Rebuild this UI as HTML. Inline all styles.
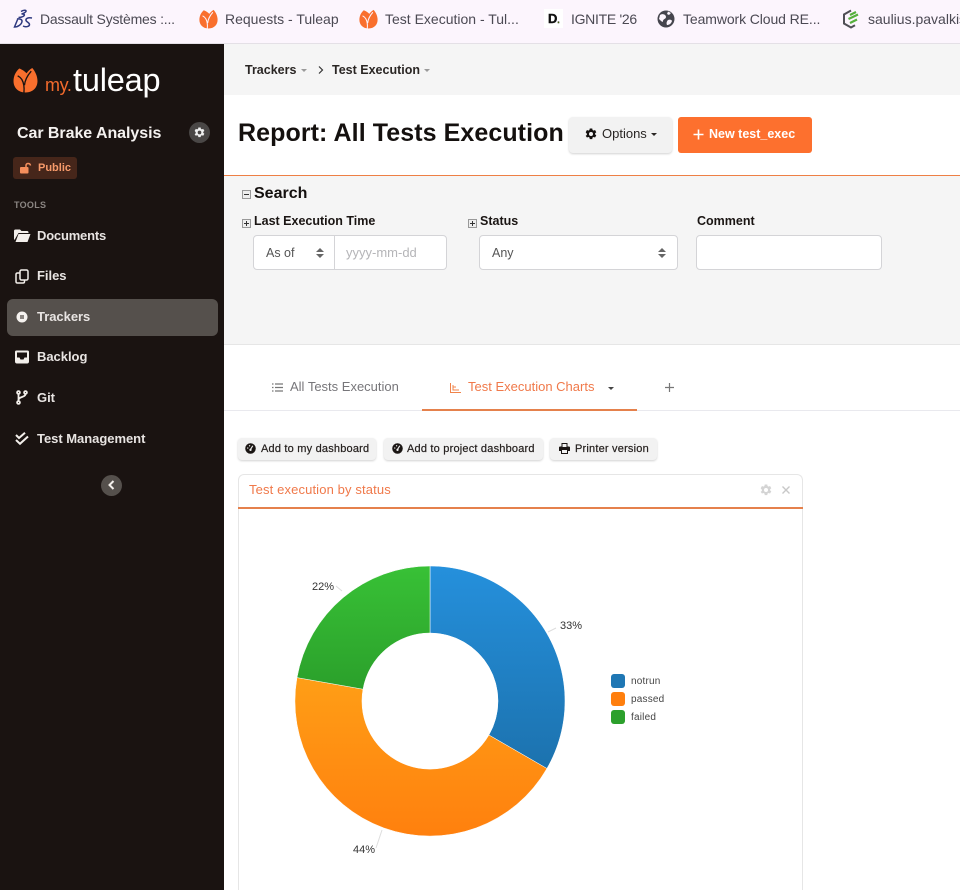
<!DOCTYPE html>
<html lang="en"><head><meta charset="utf-8"><title>Report: All Tests Execution</title>
<style>
html{margin:0;padding:0;background:#fff;width:960px;height:890px;overflow:hidden}
body{margin:0;padding:0;background:#fff;width:960px;height:890px;position:relative;overflow:hidden;font-family:"Liberation Sans",sans-serif;color:#1a1513}
.a,.t{position:absolute}
.t{white-space:nowrap;line-height:20px;height:20px}
.bm{font-size:14px;color:#4b4953;top:9px}
.nav{font-size:13px;font-weight:bold;color:#e8e4e2;left:37px;letter-spacing:-.03px}
.btn{position:absolute;background:#f2f2f2;border-radius:4px;box-shadow:0 1px 2px rgba(0,0,0,.18)}
.sm{font-size:11px;color:#26211f;letter-spacing:.2px;font-weight:normal;-webkit-text-stroke:.2px #26211f}
.lab{font-size:12.500px;font-weight:bold;color:#1a1513}
.inp{position:absolute;background:#fff;border:1px solid #d4d4d7;border-radius:4px;box-sizing:border-box}
.pm{position:absolute;width:7px;height:7px;border:1px solid #999;background:#eee;box-sizing:content-box}
.pm:before{content:"";position:absolute;left:1px;right:1px;top:3px;height:1px;background:#333}
.plus:after{content:"";position:absolute;top:1px;bottom:1px;left:3px;width:1px;background:#333}
svg{position:absolute;overflow:visible}
.pct{font-size:11px;color:#333}
.lg{font-size:10px;color:#444;letter-spacing:.2px}
.up{position:absolute;width:0;height:0;border-left:4px solid transparent;border-right:4px solid transparent;border-bottom:4px solid #666}
.dn{position:absolute;width:0;height:0;border-left:4px solid transparent;border-right:4px solid transparent;border-top:4px solid #666}
</style></head><body>
<svg width="0" height="0" style="position:absolute"><defs>
<symbol id="tulip" viewBox="0 0 24 24"><path fill="#f96f2d" d="M6 1C2.500 4 .5 8.500 .5 13 .5 19.500 5 24 12 24S23.500 19.500 23.500 13C23.500 8.500 21.500 4 18.500 .5 16 2 14.500 3.500 13 5.500 11.500 4 9 2 6 1Z"/><path fill="none" stroke="currentColor" stroke-width="1.300" d="M10.500 24C11 19 10.500 15 8.500 11.500 7.500 10 6 8.800 4.500 8M11 17C11.500 12 13.500 8 17.500 3.500"/></symbol>
<symbol id="gear" viewBox="0 0 24 24"><path fill="currentColor" fill-rule="evenodd" d="M9.500 1h5l.6 3.100 2 1.100 3-1.100 2.500 4.300-2.400 2.100v2.200l2.400 2.100-2.500 4.300-3-1.100-2 1.100-.6 3.100h-5l-.6-3.100-2-1.100-3 1.100L1.400 15.800 3.800 13.700v-2.200L1.400 8.400 3.900 4.100l3 1.100 2-1.100ZM12 8a4 4 0 1 0 0 8 4 4 0 0 0 0-8Z"/></symbol>
<symbol id="dash" viewBox="0 0 24 24"><circle cx="12" cy="12" r="11.500" fill="#1a1513"/><path d="M12 14 17 6" stroke="#f2f2f2" stroke-width="2.500"/><circle cx="12" cy="15" r="2.500" fill="#f2f2f2"/><circle cx="6" cy="11" r="1.500" fill="#f2f2f2"/><circle cx="10" cy="6" r="1.500" fill="#f2f2f2"/></symbol>
<linearGradient id="gb" x1="0" y1="0" x2="0" y2="1"><stop offset="0" stop-color="#2590dc"/><stop offset="1" stop-color="#1c72ae"/></linearGradient>
<linearGradient id="go" x1="0" y1="0" x2="0" y2="1"><stop offset="0" stop-color="#ff9e16"/><stop offset="1" stop-color="#ff800e"/></linearGradient>
<linearGradient id="gg" x1="0" y1="0" x2="0" y2="1"><stop offset="0" stop-color="#38c136"/><stop offset="1" stop-color="#2ba02b"/></linearGradient>
</defs></svg>

<!-- bookmarks bar -->
<div class="a" style="left:0;top:0;width:960px;height:44px;background:#fcf5fd;border-bottom:1px solid #e4e0e6;box-sizing:border-box"></div>
<svg style="left:13px;top:9px" width="20" height="20" viewBox="0 0 20 20" fill="none" stroke="#2f3a80" stroke-width="1.500"><path d="M8 2.500C11 .5 14.500 1 12.500 3 11.500 4 10 4.700 8.500 5 11.500 4.800 12.500 6 10 7.500 8.500 8.300 7 8.500 5.500 8.500"/><path d="M5 9.500 1.500 18C5 18 8.500 15.500 9 12.500 9.300 10.500 7 9.500 4 10"/><path d="M19 9C15 8.200 12.500 9.500 13 11.500 13.500 13 16.500 13.500 16.500 15.500 16.500 17.500 13 18.500 10 17"/></svg>
<div class="t bm" style="left:40px;letter-spacing:-.2px">Dassault Systèmes :...</div>
<svg style="left:199px;top:9px;color:#fcf5fd" width="19" height="20"><use href="#tulip" width="19" height="20"/></svg>
<div class="t bm" style="left:225px">Requests - Tuleap</div>
<svg style="left:359px;top:9px;color:#fcf5fd" width="19" height="20"><use href="#tulip" width="19" height="20"/></svg>
<div class="t bm" style="left:385px">Test Execution - Tul...</div>
<div class="a" style="left:544px;top:9px;width:19px;height:19px;background:#fff"></div>
<div class="t" style="left:548px;top:9px;font-size:13px;font-weight:bold;color:#111;-webkit-text-stroke:.4px #111">D<span style="color:#7ab800;font-size:8px">.</span></div>
<div class="t bm" style="left:571px;letter-spacing:-.3px">IGNITE '26</div>
<svg style="left:657px;top:10px" width="18" height="18" viewBox="0 0 18 18"><circle cx="9" cy="9" r="8.500" fill="#45454d"/><path fill="#fcf5fd" d="M3 5C6 3 9 5 9 7S6 9 6 11 4 11 2 9ZM11 10C13 9 15 10 15 11 14 14 12 15 10 15 9 13 10 11 11 10ZM11 1.500 14 3 12 5 10 4Z"/></svg>
<div class="t bm" style="left:683px;letter-spacing:-.1px">Teamwork Cloud RE...</div>
<svg style="left:842px;top:9px" width="18" height="20" viewBox="0 0 18 20"><path d="M9 1.500 2 5.500v9l7 4 4-2.300" fill="none" stroke="#4f4f55" stroke-width="2"/><path d="M8 6 14 3M6.500 10 16 5.500M8 14 15 10.500" stroke="#55b03c" stroke-width="2.200"/></svg>
<div class="t bm" style="left:868px">saulius.pavalkis</div>

<!-- sidebar -->
<div class="a" style="left:0;top:44px;width:224px;height:846px;background:#1a1311"></div>
<svg style="left:13px;top:66px;color:#1a1311" width="25" height="28"><use href="#tulip" width="25" height="28"/></svg>
<div class="t" style="left:45px;top:73px;font-size:18px;color:#f26a2c;letter-spacing:-.4px;height:24px;line-height:24px">my.</div>
<div class="t" style="left:73px;top:62px;font-size:32.500px;color:#fff;letter-spacing:-.2px;height:36px;line-height:36px">tuleap</div>
<div class="t" style="left:17px;top:124px;font-size:16px;font-weight:bold;color:#f5f2f0;letter-spacing:-.05px">Car Brake Analysis</div>
<div class="a" style="left:189px;top:122px;width:21px;height:21px;border-radius:50%;background:#4a4746"></div>
<svg style="left:194px;top:127px;color:#f0f0f0" width="11" height="11"><use href="#gear" width="11" height="11"/></svg>
<div class="a" style="left:13px;top:157px;width:64px;height:22px;border-radius:3px;background:#46261a"></div>
<svg style="left:20px;top:162px" width="12" height="12" viewBox="0 0 12 12"><rect x="0" y="5" width="8.500" height="6.500" rx="1" fill="#f58e5c"/><path d="M6 5V3.500C6 .8 10 .8 10.500 3.500" fill="none" stroke="#f58e5c" stroke-width="1.500"/></svg>
<div class="t" style="left:38px;top:158px;font-size:11px;font-weight:bold;color:#f79a6a">Public</div>
<div class="t" style="left:14px;top:195px;font-size:9px;font-weight:bold;color:#8b8683;letter-spacing:.3px">TOOLS</div>

<div class="a" style="left:7px;top:299px;width:211px;height:37px;border-radius:6px;background:#55504c"></div>
<svg style="left:14px;top:229px" width="17" height="14" viewBox="0 0 17 14"><path fill="#f3efeb" d="M0 2C0 1 .5.500 1.500.500H6L7.500 2H13c1 0 1.500.5 1.500 1.500V4H4.500L1 10 0 11ZM4.500 5H16.500L13.500 13H1.500Z"/></svg>
<div class="t nav" style="top:226px;letter-spacing:-.2px">Documents</div>
<svg style="left:15px;top:269px" width="14" height="15" viewBox="0 0 14 15" fill="none" stroke="#f3efeb" stroke-width="1.500"><rect x="5" y="1" width="8" height="10" rx="1.500"/><path d="M5 4H2.500C1.500 4 1 4.500 1 5.500V12.500C1 13.500 1.500 14 2.500 14H8C9 14 9.500 13.500 9.500 12.500V11"/></svg>
<div class="t nav" style="top:266px">Files</div>
<svg style="left:16px;top:311px" width="12" height="12" viewBox="0 0 12 12"><circle cx="6" cy="6" r="5.500" fill="#f5f2ef"/><rect x="4" y="4" width="4" height="4" fill="#8a8581"/></svg>
<div class="t nav" style="top:307px">Trackers</div>
<svg style="left:14px;top:350px" width="16" height="14" viewBox="0 0 16 14"><path fill="#f3efeb" fill-rule="evenodd" d="M2.500.500H13.500C14.500.500 15 1 15 2V11.500C15 12.500 14.500 13.500 13 13.500H3C1.500 13.500 1 12.500 1 11.500V2C1 1 1.500.500 2.500.500ZM3 2.500V7.500H5.500L6.500 9.500H9.500L10.500 7.500H13V2.500Z"/></svg>
<div class="t nav" style="top:347px">Backlog</div>
<svg style="left:16px;top:390px" width="12" height="15" viewBox="0 0 12 15" fill="none" stroke="#f3efeb" stroke-width="1.800"><circle cx="2.500" cy="2.500" r="1.400"/><circle cx="2.500" cy="12.500" r="1.400"/><circle cx="9.500" cy="2.500" r="1.400"/><path d="M2.500 4V11M9.500 4C9.500 7.500 2.500 6.500 2.500 10"/></svg>
<div class="t nav" style="top:388px">Git</div>
<svg style="left:15px;top:432px" width="14" height="13" viewBox="0 0 14 13" fill="none" stroke="#f3efeb" stroke-width="2"><path d="M1 3 4 6 10 .8M1 8 5 11.800 13 4.500"/></svg>
<div class="t nav" style="top:429px">Test Management</div>
<div class="a" style="left:101px;top:475px;width:21px;height:21px;border-radius:50%;background:#55504c"></div>
<svg style="left:108px;top:480px" width="7" height="10" viewBox="0 0 7 10" fill="none" stroke="#f3efeb" stroke-width="2"><path d="M5.500 1 1.500 5 5.500 9"/></svg>

<!-- breadcrumb -->
<div class="a" style="left:224px;top:44px;width:736px;height:51px;background:#f5f5f5"></div>
<div class="t" style="left:245px;top:60px;font-size:12.500px;font-weight:bold;color:#2a2624">Trackers</div>
<div class="a" style="left:301px;top:69px;border:3px solid transparent;border-top:3px solid #9a9a9a;border-bottom:0"></div>
<svg style="left:318px;top:65px" width="6" height="10" viewBox="0 0 6 10" fill="none" stroke="#333" stroke-width="1.200"><path d="M1 1.500 4.500 5 1 8.500"/></svg>
<div class="t" style="left:332px;top:60px;font-size:12.500px;font-weight:bold;color:#2a2624">Test Execution</div>
<div class="a" style="left:424px;top:69px;border:3px solid transparent;border-top:3px solid #9a9a9a;border-bottom:0"></div>

<!-- title -->
<div class="t" style="left:238px;top:117px;font-size:25px;font-weight:bold;color:#14100e;height:32px;line-height:32px;letter-spacing:.08px">Report: All Tests Execution</div>
<div class="btn" style="left:569px;top:117px;width:103px;height:36px"></div>
<svg style="left:585px;top:128px;color:#14100e" width="12" height="12"><use href="#gear" width="12" height="12"/></svg>
<div class="t" style="left:602px;top:124px;font-size:13px;color:#2a2624">Options</div>
<div class="a" style="left:651px;top:133px;border:3px solid transparent;border-top:3px solid #2a2624;border-bottom:0"></div>
<div class="a" style="left:678px;top:117px;width:134px;height:36px;border-radius:3px;background:#fd702e"></div>
<svg style="left:693px;top:129px" width="11" height="11" viewBox="0 0 11 11" stroke="#fff" stroke-width="1.600"><path d="M5.500 .5V10.500M.5 5.500H10.500"/></svg>
<div class="t" style="left:709px;top:124px;font-size:12.500px;font-weight:bold;color:#fff">New test_exec</div>

<!-- search -->
<div class="a" style="left:224px;top:176px;width:736px;height:169px;background:#f5f5f5;border-bottom:1px solid #e6e6e6;box-sizing:border-box"></div>
<div class="a" style="left:224px;top:175px;width:736px;height:1px;background:#ee7f45"></div>
<div class="pm" style="left:242px;top:190px"></div>
<div class="t" style="left:254px;top:184px;font-size:16px;font-weight:bold;color:#14100e">Search</div>
<div class="pm plus" style="left:242px;top:219px"></div>
<div class="t lab" style="left:254px;top:211px">Last Execution Time</div>
<div class="pm plus" style="left:468px;top:219px"></div>
<div class="t lab" style="left:480px;top:211px">Status</div>
<div class="t lab" style="left:697px;top:211px">Comment</div>
<div class="inp" style="left:253px;top:235px;width:194px;height:35px"></div>
<div class="a" style="left:334px;top:236px;width:1px;height:33px;background:#d4d4d7"></div>
<div class="t" style="left:266px;top:243px;font-size:12.500px;color:#555">As of</div>
<div class="up" style="left:316px;top:248px"></div>
<div class="dn" style="left:316px;top:254px"></div>
<div class="t" style="left:346px;top:243px;font-size:13px;color:#b5b5b8">yyyy-mm-dd</div>
<div class="inp" style="left:479px;top:235px;width:199px;height:35px"></div>
<div class="t" style="left:492px;top:243px;font-size:12.500px;color:#555">Any</div>
<div class="up" style="left:658px;top:248px"></div>
<div class="dn" style="left:658px;top:254px"></div>
<div class="inp" style="left:696px;top:235px;width:186px;height:35px"></div>

<!-- report tabs -->
<div class="a" style="left:224px;top:410px;width:736px;height:1px;background:#e9e9ee"></div>
<div class="a" style="left:422px;top:409px;width:215px;height:2px;background:#e5814c"></div>
<svg style="left:272px;top:383px" width="11" height="9" viewBox="0 0 11 9" stroke="#777" stroke-width="1.200"><path d="M3 1H11M3 4.500H11M3 8H11M0 1H1.500M0 4.500H1.500M0 8H1.500"/></svg>
<div class="t" style="left:290px;top:377px;font-size:13px;color:#77767a">All Tests Execution</div>
<svg style="left:450px;top:383px" width="11" height="10" viewBox="0 0 11 10" fill="none" stroke="#f0834a" stroke-width="1"><path d="M.5 0V9.500H11M3 2V7.500M3 4H6M3 7H9"/></svg>
<div class="t" style="left:468px;top:377px;font-size:13px;color:#f0794a">Test Execution Charts</div>
<div class="a" style="left:608px;top:387px;border:3px solid transparent;border-top:3px solid #444;border-bottom:0"></div>
<svg style="left:665px;top:383px" width="9" height="9" viewBox="0 0 9 9" stroke="#777" stroke-width="1.200"><path d="M4.500 0V9M0 4.500H9"/></svg>

<!-- chart buttons -->
<div class="btn" style="left:238px;top:438px;width:138px;height:22px"></div>
<svg style="left:245px;top:443px" width="11" height="11"><use href="#dash" width="11" height="11"/></svg>
<div class="t sm" style="left:261px;top:439px">Add to my dashboard</div>
<div class="btn" style="left:384px;top:438px;width:159px;height:22px"></div>
<svg style="left:392px;top:443px" width="11" height="11"><use href="#dash" width="11" height="11"/></svg>
<div class="t sm" style="left:407px;top:439px">Add to project dashboard</div>
<div class="btn" style="left:550px;top:438px;width:107px;height:22px"></div>
<svg style="left:559px;top:443px" width="11" height="11" viewBox="0 0 11 11"><path fill="#1a1513" fill-rule="evenodd" d="M2.500 0H8.500V3.500H10C10.700 3.500 11 4 11 4.500V8H9V11H2V8H0V4.500C0 4 .3 3.500 1 3.500H2.500ZM3.500 1V4H7.500V1ZM3 7V10H8V7Z"/></svg>
<div class="t sm" style="left:575px;top:439px">Printer version</div>

<!-- chart card -->
<div class="a" style="left:238px;top:474px;width:565px;height:416px;border:1px solid #e6e6e6;border-bottom:0;border-radius:6px 6px 0 0;box-sizing:border-box;background:#fff"></div>
<div class="a" style="left:238px;top:507px;width:565px;height:2px;background:#e5814c"></div>
<div class="t" style="left:249px;top:480px;font-size:13px;color:#f0794a;letter-spacing:.13px">Test execution by status</div>
<svg style="left:760px;top:484px;color:#d4d4d4" width="12" height="12"><use href="#gear" width="12" height="12"/></svg>
<svg style="left:782px;top:486px" width="8" height="8" viewBox="0 0 8 8" stroke="#c8c8c8" stroke-width="1.400"><path d="M.5 .5 7.500 7.500M7.500 .5 .5 7.500"/></svg>

<svg style="left:0;top:0" width="960" height="890" viewBox="0 0 960 890">
<path fill="url(#gb)" stroke="#fff" stroke-width=".5" d="M430 566A135 135 0 0 1 546.900 768.500L488.900 735A68 68 0 0 0 430 633Z"/>
<path fill="url(#go)" stroke="#fff" stroke-width=".5" d="M546.900 768.500A135 135 0 0 1 297 677.600L363 689.200A68 68 0 0 0 488.900 735Z"/>
<path fill="url(#gg)" stroke="#fff" stroke-width=".5" d="M297 677.600A135 135 0 0 1 430 566V633A68 68 0 0 0 363 689.200Z"/>
<path fill="none" stroke="#ddd" d="M342 591 336 586M548 632 556 628M382 830 376 848"/>
</svg>
<div class="t pct" style="left:312px;top:577px">22%</div>
<div class="t pct" style="left:560px;top:616px">33%</div>
<div class="t pct" style="left:353px;top:840px">44%</div>
<div class="a" style="left:611px;top:674px;width:14px;height:14px;border-radius:3px;background:#1f77b4"></div>
<div class="a" style="left:611px;top:692px;width:14px;height:14px;border-radius:3px;background:#ff7f0e"></div>
<div class="a" style="left:611px;top:710px;width:14px;height:14px;border-radius:3px;background:#2ca02c"></div>
<div class="t lg" style="left:631px;top:672px">notrun</div>
<div class="t lg" style="left:631px;top:690px">passed</div>
<div class="t lg" style="left:631px;top:708px">failed</div>
</body></html>
